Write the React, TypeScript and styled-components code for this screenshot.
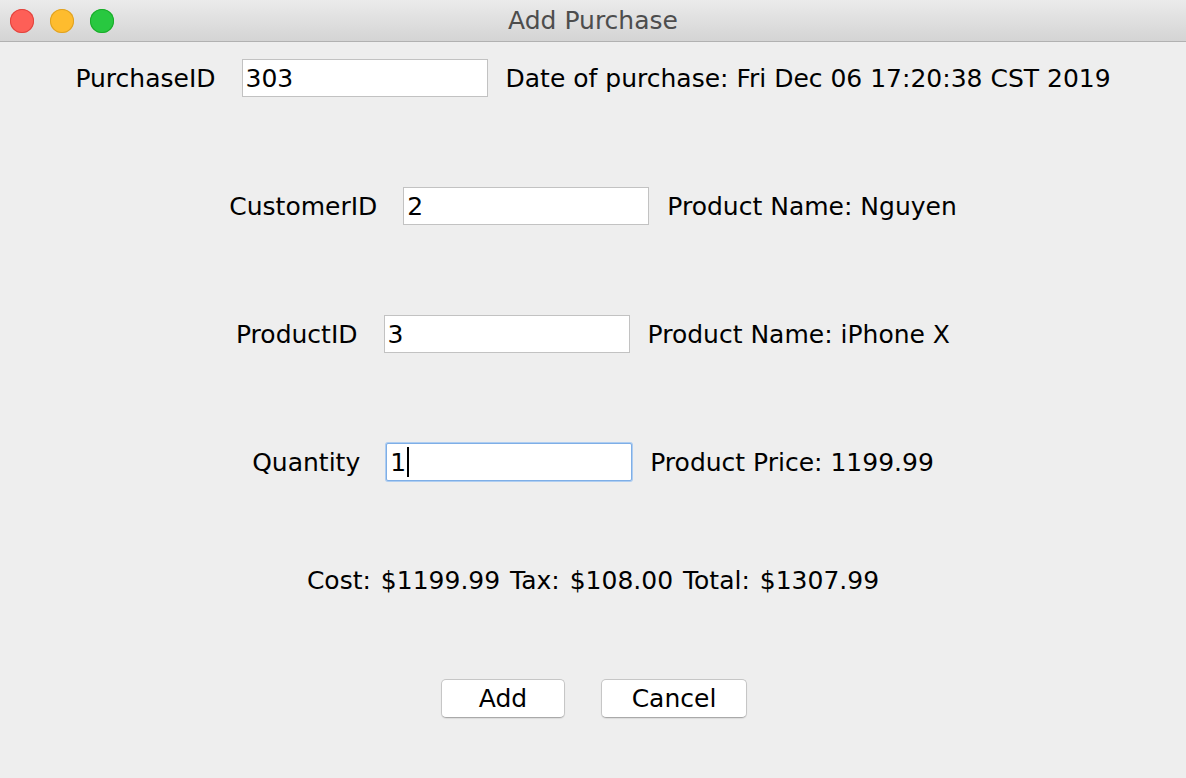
import React from "react";
import styled, { createGlobalStyle } from "styled-components";

const Global = createGlobalStyle`
  html, body { margin: 0; padding: 0; }
  body {
    background: #eeeeee;
    font-family: "DejaVu Sans", "Liberation Sans", sans-serif;
  }
`;

const Window = styled.div`
  width: 1186px;
  height: 778px;
  display: flex;
  flex-direction: column;
  background: #eeeeee;
  overflow: hidden;
`;

const TitleBar = styled.div`
  height: 41px;
  flex: none;
  display: flex;
  align-items: center;
  position: relative;
  background: linear-gradient(#ebebeb, #d4d4d4);
  border-bottom: 1px solid #b1b1b1;
`;

const Lights = styled.div`
  display: flex;
  gap: 16px;
  padding-left: 10px;
`;

const Light = styled.span<{ $fill: string; $edge: string }>`
  width: 24px;
  height: 24px;
  border-radius: 50%;
  background: ${(p) => p.$fill};
  box-shadow: inset 0 0 0 1px ${(p) => p.$edge};
`;

const Title = styled.div`
  position: absolute;
  left: 0;
  right: 0;
  text-align: center;
  font-size: 25px;
  color: #4d4d4d;
  pointer-events: none;
`;

const Content = styled.div`
  display: flex;
  flex-direction: column;
  padding-top: 17px;
`;

const Row = styled.div<{ $top: number }>`
  display: flex;
  justify-content: center;
  align-items: center;
  height: 38px;
  margin-top: ${(p) => p.$top}px;
  font-size: 25px;
  color: #000;
`;

const Label = styled.span`
  margin-right: 26px;
  white-space: nowrap;
`;

const Info = styled.span`
  margin-left: 18px;
  white-space: nowrap;
`;

const Field = styled.div<{ $focused?: boolean }>`
  box-sizing: border-box;
  width: 246px;
  height: 38px;
  background: #fff;
  border: 1px solid ${(p) => (p.$focused ? "#7eaee6" : "#c2c2c2")};
  box-shadow: ${(p) => (p.$focused ? "0 0 0 1px #aecdf1" : "none")};
  border-radius: ${(p) => (p.$focused ? "2px" : "0")};
  display: flex;
  align-items: center;
  padding-left: 3px;
  font-size: 25px;
`;

const Caret = styled.span`
  display: inline-block;
  width: 2px;
  height: 30px;
  background: #000;
  margin-left: 1px;
`;

const Summary = styled.div`
  display: flex;
  justify-content: center;
  align-items: center;
  height: 38px;
  margin-top: 80px;
  font-size: 25px;
  word-spacing: 2px;
`;

const Buttons = styled.div`
  display: flex;
  justify-content: center;
  gap: 36px;
  margin-top: 80px;
  padding-left: 2px;
`;

const Button = styled.button<{ $w: number }>`
  box-sizing: border-box;
  width: ${(p) => p.$w}px;
  height: 39px;
  background: #fff;
  border: 1px solid #c6c6c6;
  border-bottom-color: #a9a9a9;
  border-radius: 5px;
  box-shadow: 0 1px 1px rgba(0, 0, 0, 0.08);
  font-family: "DejaVu Sans", "Liberation Sans", sans-serif;
  font-size: 25px;
  color: #000;
  padding: 0;
`;

export default function App() {
  return (
    <Window>
      <Global />
      <TitleBar>
        <Lights>
          <Light $fill="#fe5f57" $edge="#e0443e" />
          <Light $fill="#febc2e" $edge="#dea123" />
          <Light $fill="#28c840" $edge="#1aab29" />
        </Lights>
        <Title>Add Purchase</Title>
      </TitleBar>
      <Content>
        <Row $top={0}>
          <Label>PurchaseID</Label>
          <Field>303</Field>
          <Info>Date of purchase: Fri Dec 06 17:20:38 CST 2019</Info>
        </Row>
        <Row $top={90}>
          <Label>CustomerID</Label>
          <Field>2</Field>
          <Info>Product Name: Nguyen</Info>
        </Row>
        <Row $top={90}>
          <Label>ProductID</Label>
          <Field>3</Field>
          <Info>Product Name: iPhone X</Info>
        </Row>
        <Row $top={90}>
          <Label>Quantity</Label>
          <Field $focused>
            1<Caret />
          </Field>
          <Info>Product Price: 1199.99</Info>
        </Row>
        <Summary>Cost: $1199.99 Tax: $108.00 Total: $1307.99</Summary>
        <Buttons>
          <Button $w={124}>Add</Button>
          <Button $w={146}>Cancel</Button>
        </Buttons>
      </Content>
    </Window>
  );
}
